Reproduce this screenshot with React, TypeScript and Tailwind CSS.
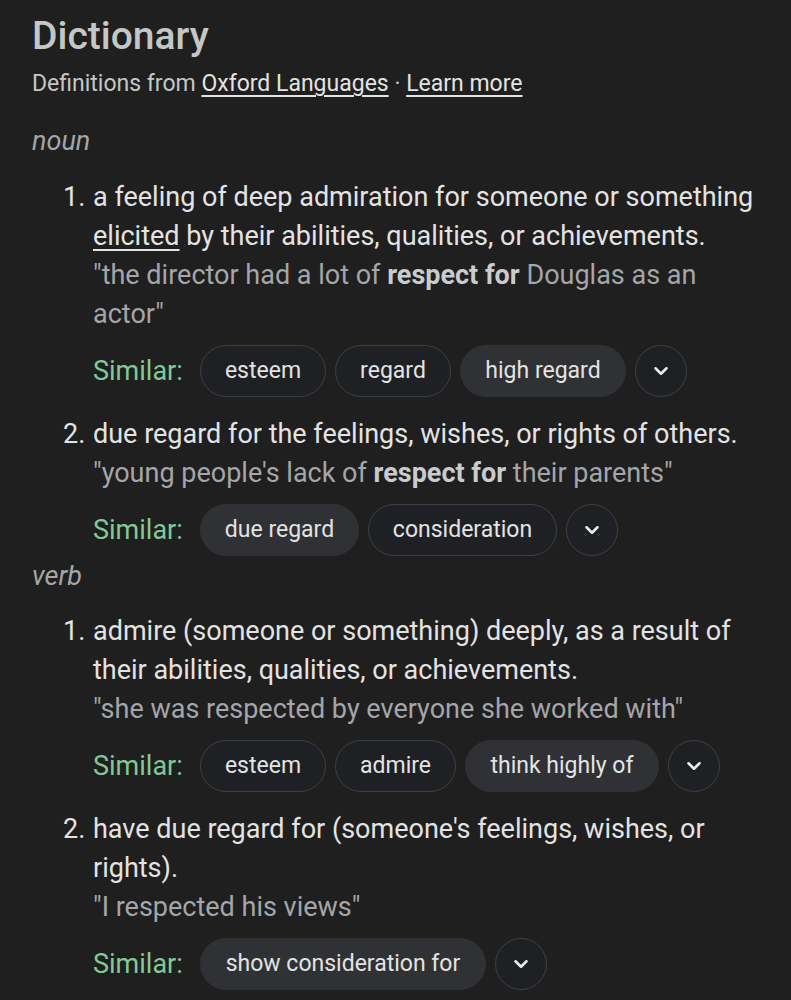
import React from "react";

const Chevron = () => (
  <svg width="22" height="22" viewBox="0 0 24 24" fill="none">
    <path d="M6 9l6 6 6-6" stroke="#e8eaed" strokeWidth="2.8" strokeLinecap="round" strokeLinejoin="round" />
  </svg>
);

type Chip = { t: string; filled?: boolean; w: number };

const SimilarRow = ({ chips }: { chips: Chip[] }) => (
  <div className="flex items-center h-[58px]">
    <span className="text-[#81c995] text-[27px] w-[107px]">Similar:</span>
    <div className="flex items-center gap-[9px]">
      {chips.map((c) => (
        <div
          key={c.t}
          style={{ width: c.w }}
          className={
            c.filled
              ? "h-[52px] rounded-full bg-[#303134] border border-[#303134] flex items-center justify-center text-[23px] text-[#e3e3e3]"
              : "h-[52px] rounded-full bg-[#1f2023] border border-[#3c4043] flex items-center justify-center text-[23px] text-[#e3e3e3]"
          }
        >
          {c.t}
        </div>
      ))}
      <div className="w-[52px] h-[52px] rounded-full bg-[#1f2023] border border-[#3c4043] flex items-center justify-center">
        <Chevron />
      </div>
    </div>
  </div>
);

const Item = ({ n, children }: { n: string; children: React.ReactNode }) => (
  <div className="flex pl-[31px]">
    <span className="w-[30px] shrink-0 text-[27px] leading-[39px] text-[#e3e3e3]">{n}</span>
    <div className="flex-1 pr-[26px]">{children}</div>
  </div>
);

const Def = ({ children }: { children: React.ReactNode }) => (
  <div className="text-[27px] leading-[39px] text-[#e3e3e3]">{children}</div>
);
const Ex = ({ children }: { children: React.ReactNode }) => (
  <div className="text-[27px] leading-[39px] text-[#a4a6a9]">{children}</div>
);
const B = ({ children }: { children: React.ReactNode }) => (
  <b className="font-bold text-[#c9cbce]">{children}</b>
);

export default function App() {
  return (
    <div
      className="w-[791px] h-[1000px] overflow-hidden bg-[#1f1f1f] pl-[32px]"
      style={{ fontFamily: "Roboto, 'Noto Sans', sans-serif" }}
    >
      <div className="pt-[12px] text-[39px] leading-[48px] font-medium text-[#c4c7c5]">Dictionary</div>
      <div className="mt-[9px] text-[23px] leading-[30px] text-[#c4c7c5]">
        Definitions from <span className="underline underline-offset-4 text-[#e3e3e3]">Oxford Languages</span>
        <span> · </span>
        <span className="underline underline-offset-4 text-[#e3e3e3]">Learn more</span>
      </div>
      <div className="mt-[26px] italic text-[27px] leading-[32px] text-[#a4a6a9]">noun</div>

      <div className="mt-[21px]">
        <Item n="1.">
          <Def>
            a feeling of deep admiration for someone or something{" "}
            <span className="underline underline-offset-4">elicited</span> by their abilities, qualities, or achievements.
          </Def>
          <Ex>
            "the director had a lot of <B>respect for</B> Douglas as an actor"
          </Ex>
          <div className="mt-[8px]">
            <SimilarRow
              chips={[
                { t: "esteem", w: 126 },
                { t: "regard", w: 116 },
                { t: "high regard", filled: true, w: 166 },
              ]}
            />
          </div>
        </Item>
        <div className="mt-[15px]">
          <Item n="2.">
            <Def>due regard for the feelings, wishes, or rights of others.</Def>
            <Ex>
              "young people's lack of <B>respect for</B> their parents"
            </Ex>
            <div className="mt-[8px]">
              <SimilarRow
                chips={[
                  { t: "due regard", filled: true, w: 159 },
                  { t: "consideration", w: 189 },
                ]}
              />
            </div>
          </Item>
        </div>
      </div>

      <div className="mt-[1px] italic text-[27px] leading-[32px] text-[#a4a6a9]">verb</div>

      <div className="mt-[20px]">
        <Item n="1.">
          <Def>admire (someone or something) deeply, as a result of their abilities, qualities, or achievements.</Def>
          <Ex>"she was respected by everyone she worked with"</Ex>
          <div className="mt-[8px]">
            <SimilarRow
              chips={[
                { t: "esteem", w: 126 },
                { t: "admire", w: 121 },
                { t: "think highly of", filled: true, w: 194 },
              ]}
            />
          </div>
        </Item>
        <div className="mt-[15px]">
          <Item n="2.">
            <Def>have due regard for (someone's feelings, wishes, or rights).</Def>
            <Ex>"I respected his views"</Ex>
            <div className="mt-[8px]">
              <SimilarRow chips={[{ t: "show consideration for", filled: true, w: 286 }]} />
            </div>
          </Item>
        </div>
      </div>
    </div>
  );
}
